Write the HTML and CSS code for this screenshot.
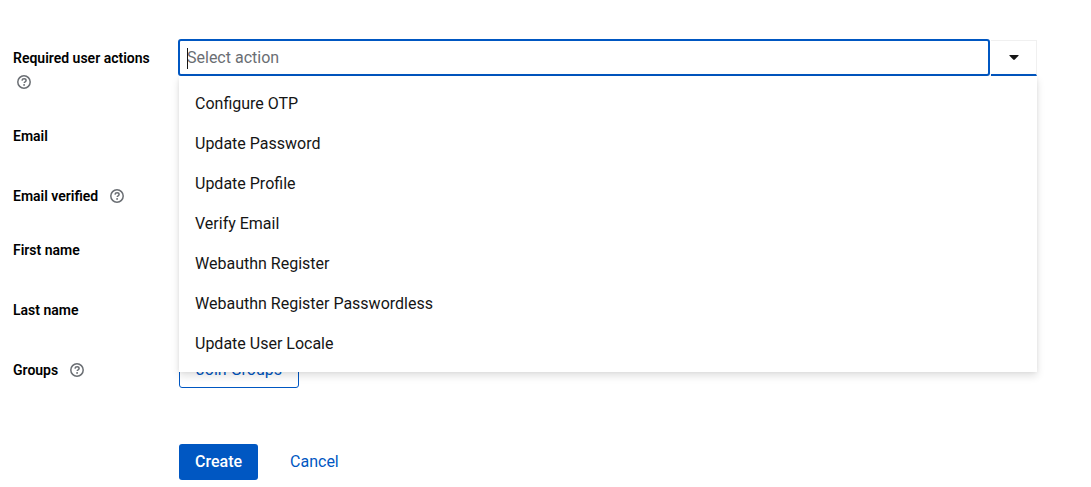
FILE: index.html
```html
<!DOCTYPE html>
<html lang="en">
<head>
<meta charset="utf-8">
<meta name="viewport" content="width=device-width, initial-scale=1">
<title>Create user</title>
<link rel="stylesheet" href="styles.css">
</head>
<body>
<svg class="sprite" aria-hidden="true">
  <symbol id="help" viewBox="0 0 14 14">
    <circle cx="7" cy="7" r="6.2" fill="none" stroke="currentColor" stroke-width="1.5"/>
    <path d="M5 5.6C5.1 4.5 5.9 3.8 7.1 3.8c1.2 0 2 .7 2 1.7 0 1.4-1.9 1.3-1.9 2.6" fill="none" stroke="currentColor" stroke-width="1.5"/>
    <circle cx="7.1" cy="9.9" r=".95" fill="currentColor"/>
  </symbol>
</svg>
<form class="form">
  <div class="row">
    <div class="label">
      <label for="actions">Required user actions</label>
      <button type="button" class="help" aria-label="Help for required user actions"><svg><use href="#help"/></svg></button>
    </div>
    <div class="select">
      <div class="typeahead">
        <input id="actions" class="typeahead-input" type="text" placeholder="Select action" autocomplete="off" role="combobox" aria-expanded="true" aria-controls="action-list">
      </div>
      <button type="button" class="toggle" aria-label="Toggle actions">
        <svg viewBox="0 0 10 5"><path d="M.8 0h8.4q.8.1.3.8L5.8 4.6q-.8.7-1.6 0L.5.8Q0 .1.8 0z" fill="currentColor"/></svg>
      </button>
      <ul id="action-list" class="menu" role="listbox">
        <li><button type="button" class="option" role="option">Configure OTP</button></li>
        <li><button type="button" class="option" role="option">Update Password</button></li>
        <li><button type="button" class="option" role="option">Update Profile</button></li>
        <li><button type="button" class="option" role="option">Verify Email</button></li>
        <li><button type="button" class="option" role="option">Webauthn Register</button></li>
        <li><button type="button" class="option" role="option">Webauthn Register Passwordless</button></li>
        <li><button type="button" class="option" role="option">Update User Locale</button></li>
      </ul>
    </div>
  </div>
  <div class="row">
    <div class="label"><label for="email">Email</label></div>
    <input id="email" class="field" type="email">
  </div>
  <div class="row">
    <div class="label">
      <label for="verified">Email verified</label>
      <button type="button" class="help" aria-label="Help for email verified"><svg><use href="#help"/></svg></button>
    </div>
    <input id="verified" class="check" type="checkbox">
  </div>
  <div class="row">
    <div class="label"><label for="first">First name</label></div>
    <input id="first" class="field" type="text">
  </div>
  <div class="row">
    <div class="label"><label for="last">Last name</label></div>
    <input id="last" class="field" type="text">
  </div>
  <div class="row">
    <div class="label">
      <label for="groups">Groups</label>
      <button type="button" class="help" aria-label="Help for groups"><svg><use href="#help"/></svg></button>
    </div>
    <div><button id="groups" type="button" class="btn secondary">Join Groups</button></div>
  </div>
  <div class="row actions">
    <div class="buttons">
      <button type="submit" class="btn primary">Create</button>
      <button type="button" class="btn link">Cancel</button>
    </div>
  </div>
</form>
</body>
</html>
```
FILE: styles.css
```css
* {
  box-sizing: border-box;
}

body {
  margin: 0;
  background: #fff;
  color: #151515;
  font-family: Roboto, "Liberation Sans", sans-serif;
  font-size: 16px;
  line-height: 24px;
}

button,
input {
  font: inherit;
  color: inherit;
}

.sprite {
  position: absolute;
  width: 0;
  height: 0;
}

.form {
  display: flex;
  flex-direction: column;
  gap: 24px;
  padding: 40px 54px 7px 13px;
}

.row {
  display: grid;
  grid-template-columns: 142px 1fr;
  column-gap: 24px;
  align-items: start;
}

.label {
  display: flex;
  flex-wrap: wrap;
  column-gap: 8px;
  padding-top: 6px;
  color: #000;
  font-size: 14px;
  font-weight: 600;
  white-space: nowrap;
}

.help {
  display: flex;
  align-items: center;
  height: 24px;
  padding: 0 4px;
  border: 0;
  background: none;
  color: #6a6e73;
}

.help svg {
  width: 14px;
  height: 14px;
}

.select {
  position: relative;
  display: flex;
  height: 36px;
  border: 1px solid #f0f0f0;
  border-bottom: 2px solid #0057c2;
}

.typeahead {
  position: relative;
  flex: 1;
  display: flex;
  margin: -2px 0 -2px -2px;
  border-right: 1px solid #fff;
  background: #fff;
}

.typeahead::before {
  content: "";
  position: absolute;
  left: 9px;
  top: 9px;
  width: 1px;
  height: 21px;
  background: #151515;
}

.typeahead-input {
  flex: 1;
  min-width: 0;
  padding: 0 7px;
  border: 2px solid #0057c2;
  border-radius: 3px;
  outline: 0;
  background: none;
}

.typeahead-input::placeholder {
  color: #6a6e73;
  opacity: 1;
}

.toggle {
  display: flex;
  align-items: center;
  justify-content: center;
  width: 45px;
  padding: 0;
  border: 0;
  background: #fff;
}

.toggle svg {
  width: 10px;
  height: 5px;
}

.menu {
  position: absolute;
  z-index: 2;
  top: 100%;
  left: -1px;
  right: -1px;
  margin: 2px 0 0;
  padding: 8px 0;
  list-style: none;
  background: #fff;
  box-shadow: 0 4px 8px rgba(3, 3, 3, 0.12), 0 0 4px rgba(3, 3, 3, 0.06);
}

.option {
  display: block;
  width: 100%;
  padding: 8px 16px;
  border: 0;
  background: none;
  text-align: left;
}

.field {
  width: 100%;
  height: 36px;
  padding: 0 8px;
  border: 1px solid #f0f0f0;
  border-bottom-color: #8a8d90;
}

.check {
  width: 16px;
  height: 16px;
  margin: 10px 0 0;
}

.btn {
  height: 36px;
  padding: 0 16px;
  border: 0;
  border-radius: 3px;
  background: none;
  color: #0057c2;
}

.secondary {
  border: 1px solid #0057c2;
}

.primary {
  background: #0057c2;
  color: #fff;
  font-weight: 500;
}

.actions {
  margin-top: 32px;
}

.buttons {
  display: flex;
  grid-column: 2;
  gap: 16px;
}
```
